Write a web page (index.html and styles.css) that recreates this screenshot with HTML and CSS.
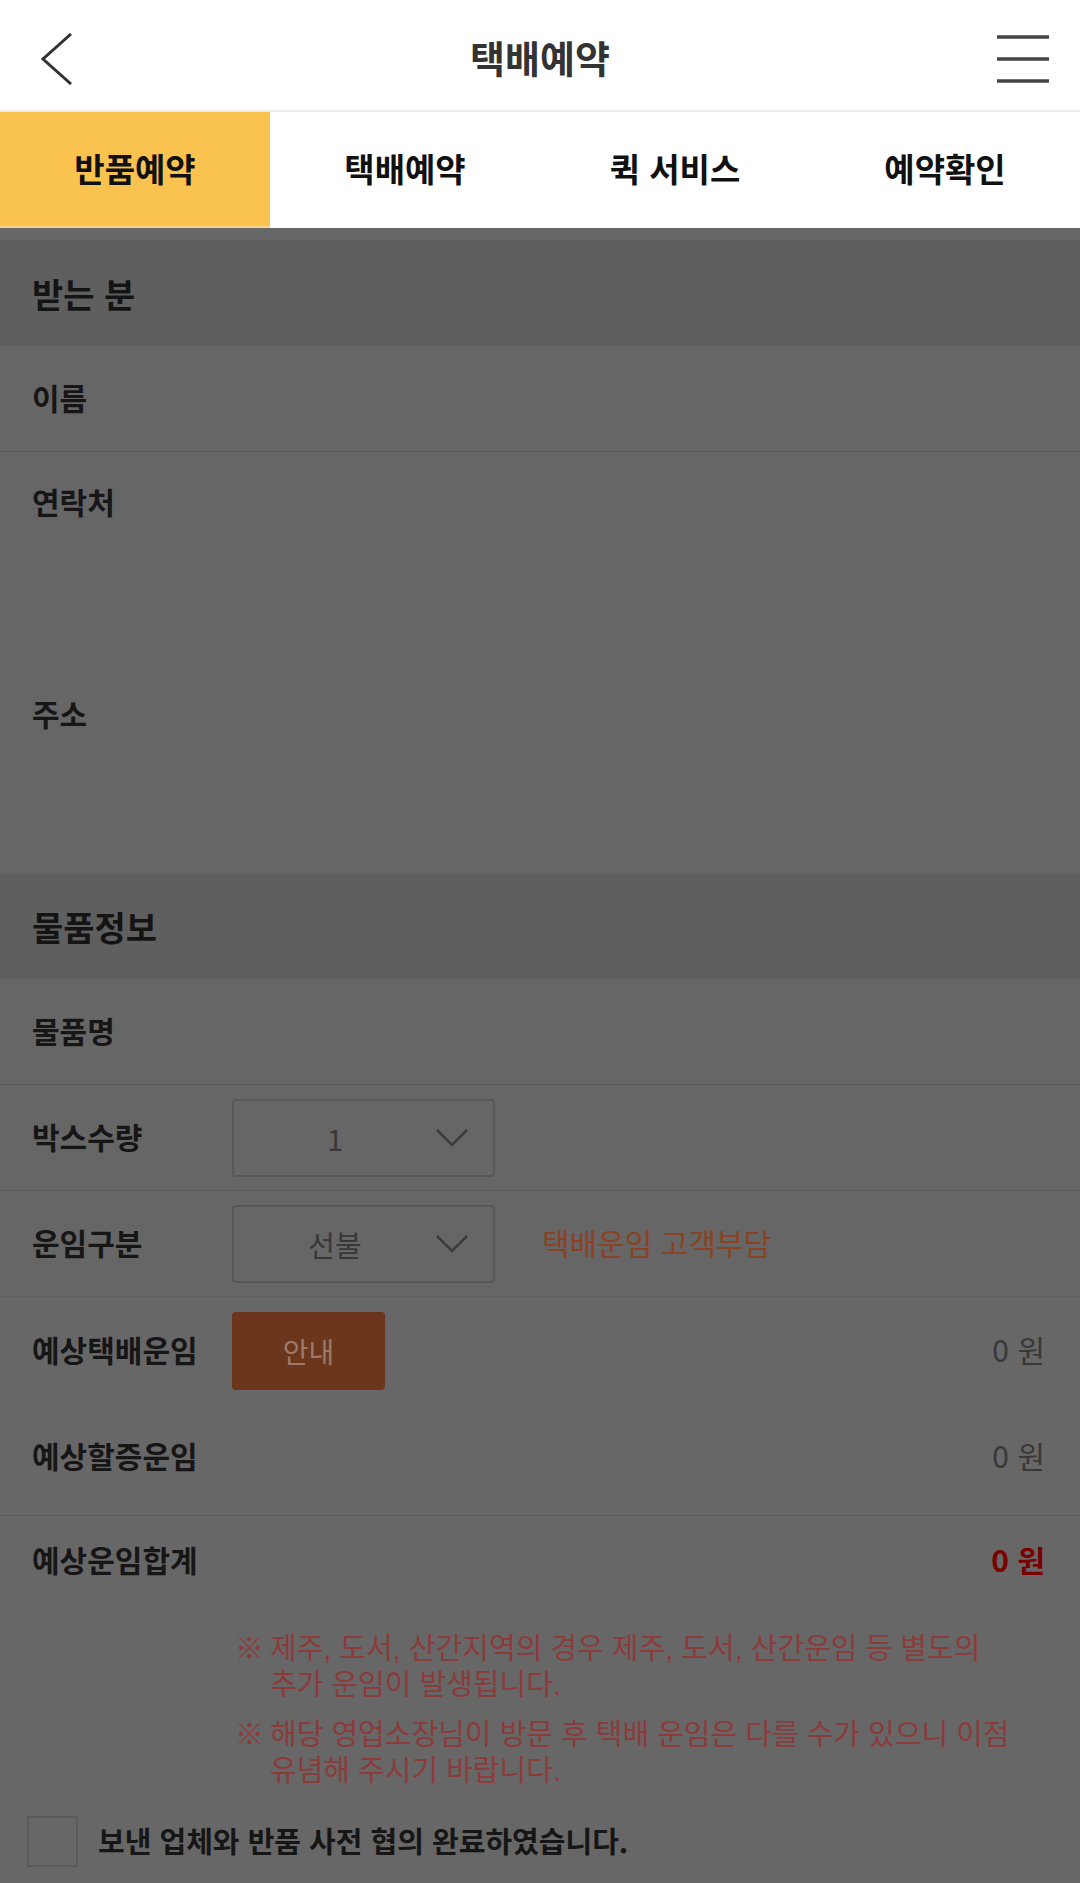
FILE: index.html
```html
<!DOCTYPE html>
<html lang="ko">
<head>
    <meta charset="UTF-8">
    <meta name="viewport" content="width=device-width, initial-scale=1.0">
    <title>택배예약</title>
    <link rel="stylesheet" href="styles.css">
</head>
<body>
    <header class="topbar">
        <button class="icon-btn back" aria-label="뒤로">
            <svg width="34" height="52" viewBox="0 0 34 52"><polyline points="31,1 3,26 31,51" fill="none" stroke="#333" stroke-width="3"/></svg>
        </button>
        <h1 class="title">택배예약</h1>
        <button class="icon-btn menu" aria-label="메뉴">
            <svg width="52" height="48" viewBox="0 0 52 48"><path d="M0 2H52M0 24H52M0 46H52" stroke="#444" stroke-width="3.5"/></svg>
        </button>
    </header>

    <nav class="tabs">
        <a class="tab active">반품예약</a>
        <a class="tab">택배예약</a>
        <a class="tab">퀵 서비스</a>
        <a class="tab">예약확인</a>
    </nav>

    <main class="form">
        <!-- 받는 분 -->
        <section>
            <h2 class="group-title">받는 분</h2>
            <div class="row"><span class="label">이름</span></div>
            <div class="row row-tall no-line"><span class="label">연락처</span></div>
            <div class="row row-tall addr no-line"><span class="label">주소</span></div>
        </section>

        <!-- 물품정보 -->
        <section>
            <h2 class="group-title">물품정보</h2>
            <div class="row"><span class="label">물품명</span></div>
            <div class="row">
                <span class="label">박스수량</span>
                <div class="select">
                    <span class="select-value">1</span>
                    <svg class="chevron" width="32" height="18" viewBox="0 0 32 18"><polyline points="1,1 16,16 31,1" fill="none" stroke="#3c3c3c" stroke-width="2.5"/></svg>
                </div>
            </div>
            <div class="row">
                <span class="label">운임구분</span>
                <div class="select">
                    <span class="select-value">선불</span>
                    <svg class="chevron" width="32" height="18" viewBox="0 0 32 18"><polyline points="1,1 16,16 31,1" fill="none" stroke="#3c3c3c" stroke-width="2.5"/></svg>
                </div>
                <span class="fee-note">택배운임 고객부담</span>
            </div>
            <div class="fees">
                <div class="fee-row">
                    <span class="label">예상택배운임</span>
                    <button class="info-btn">안내</button>
                    <span class="amount">0 원</span>
                </div>
                <div class="fee-row">
                    <span class="label">예상할증운임</span>
                    <span class="amount">0 원</span>
                </div>
            </div>
            <div class="fee-row total">
                <span class="label">예상운임합계</span>
                <span class="amount">0 원</span>
            </div>

            <ul class="notes">
                <li><span class="mark">※</span><span>제주, 도서, 산간지역의 경우 제주, 도서, 산간운임 등 별도의<br>추가 운임이 발생됩니다.</span></li>
                <li><span class="mark">※</span><span>해당 영업소장님이 방문 후 택배 운임은 다를 수가 있으니 이점<br>유념해 주시기 바랍니다.</span></li>
            </ul>

            <label class="agree">
                <span class="checkbox"></span>
                <span class="agree-text">보낸 업체와 반품 사전 협의 완료하였습니다.</span>
            </label>
        </section>
    </main>
</body>
</html>
```

FILE: styles.css
```css
/* Base */
body {
    margin: 0;
    width: 1080px;
    font-family: "Noto Sans CJK KR", "Noto Sans", sans-serif;
    background: #666;
    color: #161616;
}

/* Header */
.topbar {
    height: 102px;
    padding-top: 8px;
    display: grid;
    grid-template-columns: 1fr auto 1fr;
    align-items: center;
    background: #fff;
    border-bottom: 2px solid #ececec;
}

.icon-btn {
    background: none;
    border: none;
    padding: 0;
    display: flex;
}

.back { margin-left: 40px; justify-self: start; }
.menu { margin-right: 31px; justify-self: end; }

.title {
    margin: 0 0 5px;
    font-size: 38px;
    font-weight: 700;
    color: #333;
}

/* Tabs */
.tabs {
    display: grid;
    grid-template-columns: repeat(4, 1fr);
    height: 116px;
    background: #fff;
}

.tab {
    display: flex;
    align-items: center;
    justify-content: center;
    padding-bottom: 4px;
    font-size: 33px;
    font-weight: 700;
    color: #111;
}

.tab.active {
    background: #fac350;
    box-shadow: inset 0 -2px 0 #f6d68f;
}

/* Form (dimmed) */
.form {
    padding-top: 12px;
    background: #676767;
}

.group-title {
    margin: 0;
    height: 106px;
    display: flex;
    align-items: center;
    padding-left: 32px;
    background: #5f5f5f;
    font-size: 34px;
    font-weight: 700;
    color: #141414;
}

.row {
    height: 105px;
    display: flex;
    align-items: center;
    padding: 0 35px 0 32px;
    background: #666;
    border-bottom: 1px solid #5c5c5c;
}

.row-tall {
    height: 182px;
    align-items: flex-start;
    padding-top: 29px;
}

.row.addr {
    height: 180px;
    padding-top: 30px;
}

.no-line { border-bottom: none; }

.label {
    width: 200px;
    flex-shrink: 0;
    font-size: 30px;
    font-weight: 700;
    line-height: 40px;
    color: #161616;
}

.row .label,
.fee-row .label { margin-bottom: 4px; }

.row-tall .label { margin-bottom: 0; }

/* Select box */
.select {
    width: 263px;
    height: 78px;
    box-sizing: border-box;
    display: flex;
    align-items: center;
    border: 2px solid #585858;
    border-radius: 4px;
}

.select-value {
    flex: 1;
    text-align: center;
    font-size: 29px;
    color: #383838;
}

.chevron { margin-right: 25px; }

.fee-note {
    margin-left: 47px;
    margin-bottom: 4px;
    font-size: 30px;
    color: #8a4322;
}

/* Fees */
.fees {
    padding: 1px 0 5px;
    border-bottom: 1px solid #5c5c5c;
}

.fee-row {
    height: 106px;
    display: flex;
    align-items: center;
    padding: 0 35px 0 32px;
}

.info-btn {
    width: 153px;
    height: 78px;
    border: none;
    border-radius: 4px;
    background: #6b361b;
    color: #9b7b6b;
    font-family: inherit;
    font-size: 28px;
}

.amount {
    margin-left: auto;
    margin-bottom: 4px;
    font-size: 30px;
    color: #383838;
}

.fee-row.total { height: 90px; }

.total .amount {
    font-weight: 700;
    color: #7a0000;
}

/* Notes */
.notes {
    list-style: none;
    margin: 0;
    padding: 25px 20px 0 235px;
    font-family: "Liberation Sans", "Noto Sans CJK KR", sans-serif;
    font-size: 29px;
    line-height: 36px;
    color: #8c3b3b;
}

.notes li {
    display: flex;
    margin-bottom: 14px;
}

.notes li:last-child { margin-bottom: 0; }

.mark {
    width: 35px;
    flex-shrink: 0;
}

/* Agreement */
.agree {
    display: flex;
    align-items: center;
    gap: 20px;
    margin-top: 27px;
    padding: 0 0 40px 27px;
    font-size: 29px;
    font-weight: 700;
    color: #161616;
}

.agree-text { margin-bottom: 4px; }

.checkbox {
    width: 51px;
    height: 51px;
    box-sizing: border-box;
    border: 2px solid #5a5a5a;
}
```
